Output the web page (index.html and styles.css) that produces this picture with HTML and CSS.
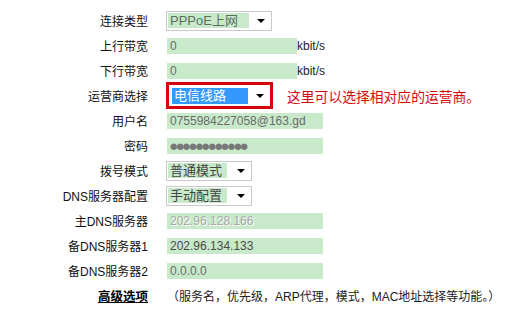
FILE: index.html
```html
<!DOCTYPE html>
<html lang="zh-CN">
<head>
    <meta charset="UTF-8">
    <title>WAN口设置</title>
    <link rel="stylesheet" href="styles.css">
</head>
<body>

    <div class="form">
        <div class="label">连接类型</div>
        <div class="value">
            <div class="select"><span class="val w-type">PPPoE上网</span><span class="arrow"></span></div>
        </div>

        <div class="label">上行带宽</div>
        <div class="value"><div class="field short">0</div><span class="unit">kbit/s</span></div>

        <div class="label">下行带宽</div>
        <div class="value"><div class="field short">0</div><span class="unit">kbit/s</span></div>

        <div class="label">运营商选择</div>
        <div class="value">
            <div class="select marked"><span class="val focus">电信线路</span><span class="arrow"></span></div>
            <span class="hint">这里可以选择相对应的运营商。</span>
        </div>

        <div class="label">用户名</div>
        <div class="value"><div class="field">0755984227058@163.gd</div></div>

        <div class="label">密码</div>
        <div class="value"><div class="field dots">●●●●●●●●●●●●</div></div>

        <div class="label">拨号模式</div>
        <div class="value">
            <div class="select small"><span class="val w-mode">普通模式</span><span class="arrow"></span></div>
        </div>

        <div class="label">DNS服务器配置</div>
        <div class="value">
            <div class="select small"><span class="val w-mode">手动配置</span><span class="arrow"></span></div>
        </div>

        <div class="label">主DNS服务器</div>
        <div class="value"><div class="field disabled">202.96.128.166</div></div>

        <div class="label">备DNS服务器1</div>
        <div class="value"><div class="field dark">202.96.134.133</div></div>

        <div class="label">备DNS服务器2</div>
        <div class="value"><div class="field">0.0.0.0</div></div>

        <div class="label"><a class="adv" href="#">高级选项</a></div>
        <div class="value note">（服务名，优先级，ARP代理，模式，MAC地址选择等功能。）</div>
    </div>

</body>
</html>
```

FILE: styles.css
```css
body {
    margin: 0;
    background-color: #fff;
    font-family: "Liberation Sans", "Noto Sans CJK SC", sans-serif;
    font-size: 12px;
    color: #111;
}
.form {
    display: grid;
    grid-template-columns: 148px 1fr;
    grid-auto-rows: 25px;
    column-gap: 19px;
    align-items: center;
    padding-top: 8px;
}
.label {
    text-align: right;
    white-space: nowrap;
}
.value {
    display: flex;
    align-items: center;
    white-space: nowrap;
}
.field {
    width: 156px;
    height: 16px;
    line-height: 16px;
    padding-left: 3px;
    box-sizing: border-box;
    background-color: #c8eacb;
    color: #6a6a6a;
}
.field.short {
    width: 130px;
}
.field.disabled {
    color: #a8a8a8;
    text-shadow: 1px 1px 0 #fff;
}
.field.dark {
    color: #4a4a4a;
}
.field.dots {
    font-family: "DejaVu Sans", sans-serif;
    font-size: 8.5px;
    letter-spacing: -1px;
    color: #777;
}
.unit {
    color: #222;
}
.select {
    display: inline-flex;
    align-items: center;
    height: 20px;
    box-sizing: border-box;
    margin-left: -1px;
    padding: 1px 6px 1px 1px;
    border: 1px solid #c8c8c8;
    background-color: #fff;
}
.val {
    height: 15px;
    line-height: 15px;
    padding-left: 2px;
    box-sizing: border-box;
    background-color: #c8eacb;
    color: #5e6e5e;
    font-size: 13px;
}
.w-type {
    width: 81px;
}
.w-mode {
    width: 59px;
    color: #444;
}
.arrow {
    width: 0;
    height: 0;
    margin-left: 8px;
    border-left: 4px solid transparent;
    border-right: 4px solid transparent;
    border-top: 4px solid #000;
}
.select.small .arrow {
    margin-left: 10px;
}
.select.marked {
    height: 21px;
    margin-left: 2px;
    padding: 2px 5px 2px 2px;
    border-color: #fff;
    outline: 3px solid #d8000c;
}
.val.focus {
    width: 76px;
    height: 16px;
    line-height: 16px;
    background-color: #3399ff;
    color: #fff;
}
.hint {
    margin-left: 17px;
    color: #d40a0a;
    font-size: 13.8px;
}
.adv {
    color: #000;
    font-size: 12.5px;
    font-weight: bold;
    text-decoration: underline;
}
.note {
    color: #222;
}
```
